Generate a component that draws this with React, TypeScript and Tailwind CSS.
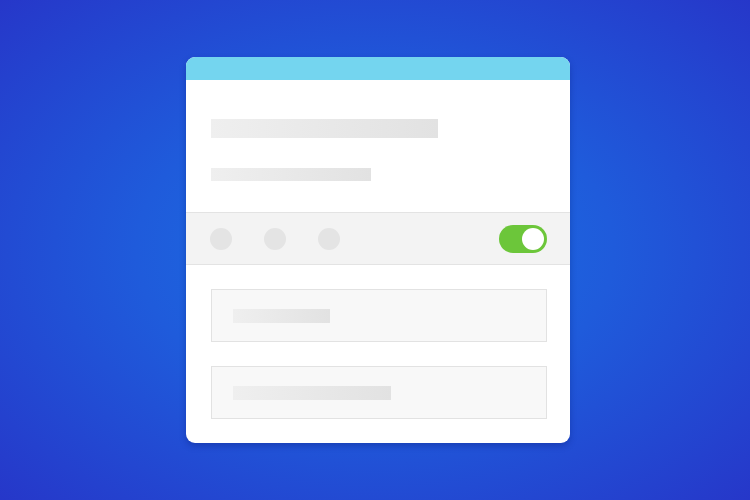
import { ReactNode } from 'react';

function Bar({ w, h }: { w: string; h: string }) {
  return <div className={`${w} ${h} bg-gradient-to-r from-[#efefef] to-[#e2e2e2]`} />;
}

function Field({ children }: { children: ReactNode }) {
  return (
    <div className="flex h-[53px] items-center border border-[#e2e2e2] bg-[#f8f8f8] px-[21px]">
      {children}
    </div>
  );
}

function Toggle() {
  return (
    <div className="flex h-[28px] w-[48px] items-center justify-end rounded-full bg-[#6cc63a] pr-[3px]">
      <div className="h-[22px] w-[22px] rounded-full bg-white" />
    </div>
  );
}

export default function App() {
  return (
    <div className="flex h-[500px] w-[750px] items-center justify-center bg-[radial-gradient(ellipse_at_center,#1a72e4_0%,#1f5bdb_45%,#2637c9_100%)] pl-[6px]">
      <div className="flex h-[386px] w-[384px] flex-col overflow-hidden rounded-[9px] bg-white shadow-[0_3px_6px_rgba(10,30,120,0.35)]">
        {/* Header */}
        <div className="h-[23px] shrink-0 bg-[#74d5ef]" />

        {/* Title lines */}
        <div className="flex flex-col gap-[30px] px-[25px] pt-[39px] pb-[31px]">
          <Bar w="w-[227px]" h="h-[19px]" />
          <Bar w="w-[160px]" h="h-[13px]" />
        </div>

        {/* Toolbar band */}
        <div className="flex h-[53px] items-center justify-between border-y border-[#e3e3e3] bg-[#f3f3f3] pl-[24px] pr-[23px]">
          <div className="flex gap-[32px]">
            <div className="h-[22px] w-[22px] rounded-full bg-[#e4e4e4]" />
            <div className="h-[22px] w-[22px] rounded-full bg-[#e4e4e4]" />
            <div className="h-[22px] w-[22px] rounded-full bg-[#e4e4e4]" />
          </div>
          <Toggle />
        </div>

        {/* Fields */}
        <div className="flex flex-col gap-[24px] py-[24px] pl-[25px] pr-[23px]">
          <Field>
            <Bar w="w-[97px]" h="h-[14px]" />
          </Field>
          <Field>
            <Bar w="w-[158px]" h="h-[14px]" />
          </Field>
        </div>
      </div>
    </div>
  );
}
